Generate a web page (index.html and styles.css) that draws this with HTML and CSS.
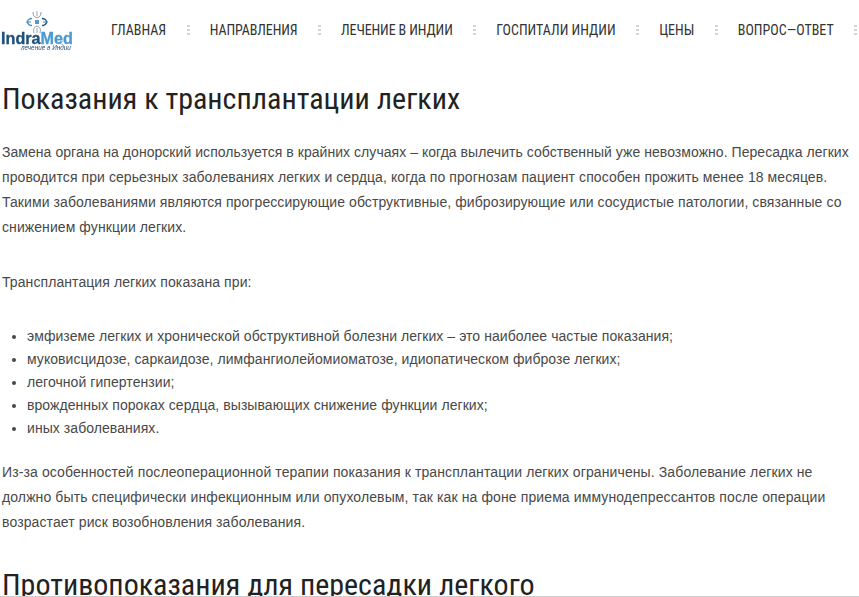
FILE: index.html
```html
<!DOCTYPE html>
<html lang="ru">
<head>
<meta charset="utf-8">
<title>Показания к трансплантации легких</title>
<link rel="stylesheet" href="styles.css">
</head>
<body>
<header class="header">
  <a class="logo">
    <svg class="logo-mark" width="32" height="22" viewBox="0 0 32 22" fill="none">
      <path d="M12 1 C12 4 13 6 16 7 C19 6 20 4 20 1" stroke="#8a9aa8" stroke-width="1"/>
      <path d="M13 22 C12 18 13 16 16 15 C19 16 20 18 19 22" stroke="#8a9aa8" stroke-width="1"/>
      <path d="M16 0V5M16 17V22" stroke="#a9b5bf" stroke-width="1.2"/>
      <path d="M11 7.5 A4.5 3.5 0 1 0 11 14.5" stroke="#3f8fc4" stroke-width="1.4"/>
      <path d="M21 7.5 A4.5 3.5 0 1 1 21 14.5" stroke="#1c4f7c" stroke-width="1.4"/>
      <path d="M5 11H10M22 11H27" stroke="#3f8fc4" stroke-width="1.1"/>
      <rect x="14" y="9" width="4" height="4" fill="#5b97c4"/>
    </svg>
    <span class="logo-name"><span class="logo-indra">Indra</span><span class="logo-med">Med</span></span>
    <span class="logo-sub">лечение в Индии</span>
  </a>
  <nav class="nav">
    <a>ГЛАВНАЯ</a><i class="sep"></i>
    <a>НАПРАВЛЕНИЯ</a><i class="sep"></i>
    <a>ЛЕЧЕНИЕ В ИНДИИ</a><i class="sep"></i>
    <a>ГОСПИТАЛИ ИНДИИ</a><i class="sep"></i>
    <a>ЦЕНЫ</a><i class="sep"></i>
    <a>ВОПРОС—ОТВЕТ</a><i class="sep"></i>
  </nav>
</header>
<main class="content">
  <h1>Показания к трансплантации легких</h1>
  <p><span class="tight">Замена органа на донорский используется в крайних случаях – когда вылечить собственный уже невозможно. Пересадка легких</span><br>проводится при серьезных заболеваниях легких и сердца, когда по прогнозам пациент способен прожить менее 18 месяцев.<br>Такими заболеваниями являются прогрессирующие обструктивные, фиброзирующие или сосудистые патологии, связанные со<br>снижением функции легких.</p>
  <p>Трансплантация легких показана при:</p>
  <ul>
    <li>эмфиземе легких и хронической обструктивной болезни легких – это наиболее частые показания;</li>
    <li>муковисцидозе, саркаидозе, лимфангиолейомиоматозе, идиопатическом фиброзе легких;</li>
    <li>легочной гипертензии;</li>
    <li>врожденных пороках сердца, вызывающих снижение функции легких;</li>
    <li>иных заболеваниях.</li>
  </ul>
  <p class="wide">Из-за особенностей послеоперационной терапии показания к трансплантации легких ограничены. Заболевание легких не<br>должно быть специфически инфекционным или опухолевым, так как на фоне приема иммунодепрессантов после операции<br>возрастает риск возобновления заболевания.</p>
  <h2>Противопоказания для пересадки легкого</h2>
</main>
</body>
</html>
```
FILE: styles.css
```css
html, body { margin: 0; padding: 0; background: #fff; height: 597px; overflow: hidden; }
body { font-family: "Liberation Sans", Arial, sans-serif; font-size: 14px; line-height: 25px; color: #484848; letter-spacing: 0.08px; }
body::after { content: ""; position: fixed; left: 0; right: 0; bottom: 0; height: 1px; background: #ccc; }
.header { display: flex; align-items: flex-start; height: 60px; padding-left: 1px; }
.logo { display: flex; flex-direction: column; align-items: center; width: 73px; padding-top: 11px; filter: blur(0.35px); letter-spacing: 0; }
.logo-mark { display: block; }
.logo-name { font-weight: 700; font-size: 16.2px; line-height: 11px; -webkit-text-stroke: 0.3px currentColor; }
.logo-indra { color: #1c4f7c; }
.logo-med { color: #4a9ad0; }
.logo-sub { font-size: 6.4px; line-height: 6px; color: #2d4f70; font-style: italic; margin-left: 18px; margin-top: 1px; white-space: nowrap; }
.nav { display: flex; align-items: center; margin-left: 38px; height: 60px; padding-top: 1px; box-sizing: border-box; font-family: Roboto, sans-serif; font-stretch: condensed; font-size: 14px; color: #333; letter-spacing: 0; }
.nav a { display: block; white-space: nowrap; }
.sep { display: block; flex: none; width: 3px; height: 12px; margin: 0 20.25px; background: repeating-linear-gradient(#d4d4d4 0 2px, transparent 2px 4px); }
.nav a:nth-of-type(2) { letter-spacing: -0.1px; }
.nav a:nth-of-type(3) { letter-spacing: -0.12px; }
.content { padding-left: 2px; }
h1, h2 { font-family: Roboto, sans-serif; font-stretch: condensed; font-weight: 400; color: #222; margin: 0; letter-spacing: 0; }
h1 { font-size: 30px; line-height: 36px; margin-top: 21px; margin-bottom: 23px; }
h2 { font-size: 30px; line-height: 36px; margin-top: 32px; }
p { margin: 0 0 30px; }
.tight { letter-spacing: 0.047px; }
.wide { letter-spacing: 0.11px; }
ul { margin: 0 0 20px; padding: 0 0 0 25px; line-height: 23px; letter-spacing: 0.06px; }
```
